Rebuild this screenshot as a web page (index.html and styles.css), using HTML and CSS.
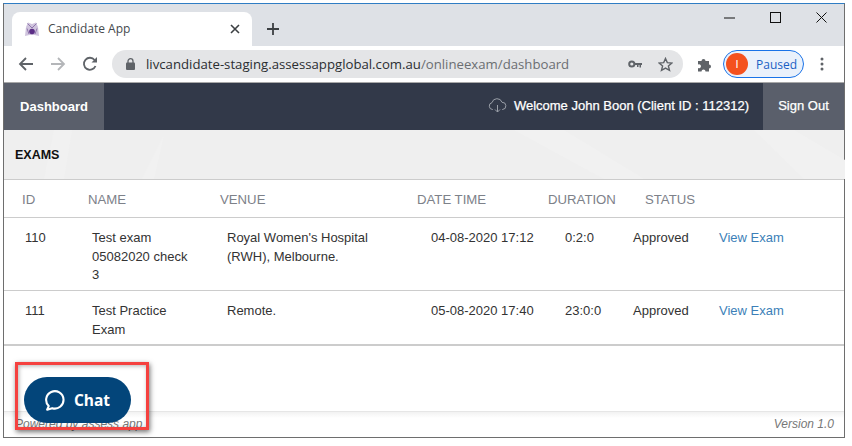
FILE: index.html
```html
<!DOCTYPE html>
<html lang="en">
<head>
<meta charset="utf-8">
<title>Candidate App</title>
<link rel="stylesheet" href="styles.css">
</head>
<body>
<div class="window">
  <div class="tabstrip">
    <div class="tab">
      <svg class="favicon" width="16" height="16" viewBox="0 0 16 16"><path d="M1 15 2 6 4 1.500 8 3 12 1.500 14 6 15 15 10.500 14H5.500Z" fill="#cfc3dd"/><path d="M3.500 2.500 8 7 12.500 2.500M3 7.500 5 13M13 7.500 11 13" stroke="#8f78ad" fill="none"/><circle cx="8" cy="10.500" r="2.800" fill="#5b2d86"/></svg>
      <span class="tab-title">Candidate App</span>
      <svg class="tab-close" width="10" height="10" viewBox="0 0 10 10"><path d="M1 1 9 9M9 1 1 9" stroke="#3c4043" stroke-width="1.600"/></svg>
    </div>
    <svg class="new-tab" width="14" height="14" viewBox="0 0 14 14"><path d="M7 1V13M1 7H13" stroke="#3c4043" stroke-width="1.800"/></svg>
    <div class="win-controls">
      <svg width="11" height="11" viewBox="0 0 11 11"><path d="M0 6H11" stroke="#111" stroke-width="1"/></svg>
      <svg width="11" height="11" viewBox="0 0 11 11"><rect x=".5" y=".5" width="10" height="10" fill="none" stroke="#111"/></svg>
      <svg width="11" height="11" viewBox="0 0 11 11"><path d="M.5.5 10.500 10.500M10.500.5 .5 10.500" stroke="#111"/></svg>
    </div>
  </div>
  <div class="toolbar">
    <svg class="tool-icon" width="16" height="16" viewBox="0 0 16 16"><path d="M15 8H2M8 2 2 8 8 14" fill="none" stroke="#5f6368" stroke-width="1.800"/></svg>
    <svg class="tool-icon" width="16" height="16" viewBox="0 0 16 16"><path d="M1 8H14M8 2 14 8 8 14" fill="none" stroke="#b4b6b9" stroke-width="1.800"/></svg>
    <svg class="tool-icon" width="16" height="16" viewBox="0 0 16 16"><path d="M13.500 10A6 6 0 1 1 12.600 4" fill="none" stroke="#5f6368" stroke-width="1.800"/><path d="M9.500 6.500H15V1Z" fill="#5f6368"/></svg>
    <div class="omnibox">
      <svg width="9" height="12" viewBox="0 0 9 12"><rect y="4.500" width="9" height="7.500" rx="1" fill="#5f6368"/><path d="M2 5V3.200a2.500 2.500 0 0 1 5 0V5" fill="none" stroke="#5f6368" stroke-width="1.300"/></svg>
      <span class="url"><span class="url-host">livcandidate-staging.assessappglobal.com.au</span>/onlineexam/dashboard</span>
      <svg class="key" width="15" height="9" viewBox="0 0 15 9"><circle cx="3.800" cy="4" r="2.600" fill="none" stroke="#5f6368" stroke-width="2"/><path d="M6 3H14V5H13V7.500H11.500V5H10.500V7H9V5H6Z" fill="#5f6368"/></svg>
      <svg class="star" width="15" height="15" viewBox="0 0 15 15"><path d="M7.500 1.500 9.300 5.600 13.900 6 10.400 9 11.500 13.400 7.500 11.100 3.500 13.400 4.600 9 1.100 6 5.700 5.600Z" fill="none" stroke="#5f6368" stroke-width="1.400"/></svg>
    </div>
    <svg class="puzzle" width="15" height="15" viewBox="0 0 15 15"><path d="M1 4H4.500A2 2 0 1 1 8.500 4H12V7.500A2 2 0 1 1 12 11.500V14.500H8.500A2 2 0 1 0 4.500 14.500H1V11A2 2 0 1 0 1 7.500Z" fill="#5f6368"/></svg>
    <div class="profile"><span class="avatar">I</span><span class="paused">Paused</span></div>
    <svg class="menu-dots" width="4" height="14" viewBox="0 0 4 14"><circle cx="2" cy="2" r="1.500" fill="#5f6368"/><circle cx="2" cy="7" r="1.500" fill="#5f6368"/><circle cx="2" cy="12" r="1.500" fill="#5f6368"/></svg>
  </div>
  <div class="page">
    <nav class="navbar">
      <a class="nav-active">Dashboard</a>
      <div class="welcome">
        <svg width="19" height="15" viewBox="0 0 19 15"><path d="M5 11.500H4.500A3.500 3.500 0 0 1 4 4.600 5.200 5.200 0 0 1 14 4.300 3.600 3.600 0 0 1 14.500 11.500H14M9.500 7V14M7 11.500 9.500 14 12 11.500" fill="none" stroke="#9a9fa8" stroke-width="1"/></svg>
        <span>Welcome John Boon (Client ID : 112312)</span>
      </div>
      <a class="signout">Sign Out</a>
    </nav>
    <header class="exams-head">
      <svg class="watermark" width="841" height="49" viewBox="0 0 841 49"><path d="M60 49 68 0H50L40 49ZM138 49 160 5 150 49ZM510 0 600 49H640L560 0ZM750 0 800 49H841V30L790 0Z" fill="#f1f1f1"/></svg>
      <h1>EXAMS</h1>
    </header>
    <div class="row row-head">
      <span class="c-id">ID</span><span class="c-name">NAME</span><span class="c-venue">VENUE</span><span class="c-date">DATE TIME</span><span class="c-dur">DURATION</span><span class="c-status">STATUS</span>
    </div>
    <div class="row row-body row-first">
      <span>110</span><span>Test exam 05082020 check 3</span><span>Royal Women's Hospital (RWH), Melbourne.</span><span>04-08-2020 17:12</span><span>0:2:0</span><span>Approved</span><a class="link">View Exam</a>
    </div>
    <div class="row row-body row-last">
      <span>111</span><span>Test Practice Exam</span><span>Remote.</span><span>05-08-2020 17:40</span><span>23:0:0</span><span>Approved</span><a class="link">View Exam</a>
    </div>
    <div class="spacer"></div>
    <footer class="footer"><span>Powered by assess app</span><span>Version 1.0</span></footer>
    <div class="chat-highlight">
      <button class="chat-btn">
        <svg width="22" height="22" viewBox="0 0 21 21"><path d="M4.500 16.300A8.300 8.300 0 1 1 7.800 18.300L3 19.800Z" fill="none" stroke="#fff" stroke-width="2" stroke-linejoin="round"/></svg>
        <span>Chat</span>
      </button>
    </div>
  </div>
</div>
</body>
</html>
```
FILE: styles.css
```css
* { box-sizing: border-box; }
html, body { margin: 0; padding: 0; background: #fff; }
body { padding: 3px 0 0 3px; width: 852px; height: 446px; overflow: hidden; font-family: "Liberation Sans", Arial, sans-serif; }
.window { width: 842px; height: 435px; border: 1px solid #6e6e6e; border-top-color: #2f7dc4; display: flex; flex-direction: column; position: relative; background: #fff; }
.tabstrip { height: 42px; background: #dee1e6; display: flex; align-items: flex-end; padding-left: 8px; flex: none; }
.tab { width: 240px; height: 34px; background: #fff; border-radius: 8px 8px 0 0; display: flex; align-items: center; padding: 0 0 1px 12px; }
.favicon { flex: none; }
.tab-title { font: 12px "Open Sans", "Noto Sans", sans-serif; color: #45494d; margin-left: 8px; flex: 1; }
.tab-close { margin-right: 12px; }
.new-tab { margin: 0 0 10px 14px; }
.win-controls { margin-left: auto; align-self: flex-start; display: flex; gap: 35px; padding: 8px 17px 0 0; }
.toolbar { height: 36px; background: #fff; display: flex; align-items: center; padding-left: 14px; flex: none; }
.tool-icon { margin-right: 16px; }
.tool-icon:nth-child(3) { margin-right: 15px; }
.omnibox { width: 571px; height: 28px; border-radius: 14px; background: #e4e5e7; display: flex; align-items: center; padding-left: 14px; flex: none; margin-left: -1px; }
.url { font: 13.200px "Open Sans", "Noto Sans", sans-serif; color: #6b6e72; margin-left: 11px; flex: 1; white-space: nowrap; }
.url-host { color: #2b2e31; }
.key { margin-right: 15px; }
.star { margin-right: 10px; }
.puzzle { margin-left: 14px; }
.profile { width: 81px; height: 28px; margin-left: 11px; border: 1px solid #1a73e8; border-radius: 14px; background: #eaf1fb; display: flex; align-items: center; padding-left: 2px; flex: none; }
.avatar { width: 22px; height: 22px; border-radius: 50%; background: #f4511e; color: #fff; font: 11px "Liberation Sans", sans-serif; display: flex; align-items: center; justify-content: center; }
.paused { font: 12px "Open Sans", "Noto Sans", sans-serif; color: #1a5fc4; margin-left: 8px; }
.menu-dots { margin-left: 16px; }
.page { flex: 1; display: flex; flex-direction: column; border-top: 1px solid #a8a8a8; position: relative; min-height: 0; }
.navbar { height: 47px; background: #323949; display: flex; align-items: stretch; color: #fff; flex: none; font-size: 13px; }
.nav-active { width: 100px; background: #5a5f6b; font-weight: 700; font-size: 13px; display: flex; align-items: center; justify-content: center; }
.welcome { margin-left: auto; display: flex; align-items: center; gap: 7px; padding-right: 14px; padding-bottom: 3px; -webkit-text-stroke: .25px #fff; }
.signout { width: 81px; background: #5a5f6b; display: flex; align-items: center; justify-content: center; padding-bottom: 3px; -webkit-text-stroke: .25px #fff; }
.exams-head { height: 50px; background: #efefef; border-bottom: 1px solid #ccc; position: relative; flex: none; display: flex; align-items: center; padding-left: 11px; }
.watermark { position: absolute; left: 0; top: 0; }
.exams-head h1 { margin: 0; font-size: 12.500px; font-weight: 700; color: #111; position: relative; }
.row { display: grid; flex: none; font-size: 13px; }
.row-head { height: 38px; border-bottom: 1px solid #ccc; align-items: center; font-size: 13.200px; color: #7d8189; grid-template-columns: 66px 132px 197px 131px 97px 1fr; padding: 1px 0 0 18px; }
.row-body { grid-template-columns: 67px 135px 204px 134px 68px 86px 1fr; padding: 11px 0 0 21px; color: #333; line-height: 18.500px; border-bottom: 1px solid #ccc; }
.row-body span:nth-child(2) { padding-right: 35px; }
.row-body span:nth-child(3) { padding-right: 30px; }
.row-first { height: 73px; }
.row-last { height: 55px; border-bottom-width: 2px; }
.link { color: #3c7fb8; }
.spacer { flex: 1; }
.footer { height: 26px; flex: none; border-top: 1px solid #e6e6e6; background: linear-gradient(#f2f2f2, #fff 6px); display: flex; justify-content: space-between; align-items: center; padding: 0 10px 2px 11px; font-size: 12px; font-style: italic; color: #777; }
.chat-highlight { position: absolute; left: 11px; bottom: 7px; width: 134px; height: 68px; border: 3px solid #f5413f; box-shadow: 1px 2px 5px rgba(0,0,0,.55), inset 1px 1px 4px rgba(0,0,0,.3); display: flex; padding: 12px 0 0 6px; }
.chat-btn { width: 107px; height: 46px; border: 0; border-radius: 23px; background: #03457a; color: #fff; display: flex; align-items: center; justify-content: center; gap: 8px; font: 700 15.500px "Open Sans", "Noto Sans", sans-serif; padding: 0 1px 0 0; }
```
